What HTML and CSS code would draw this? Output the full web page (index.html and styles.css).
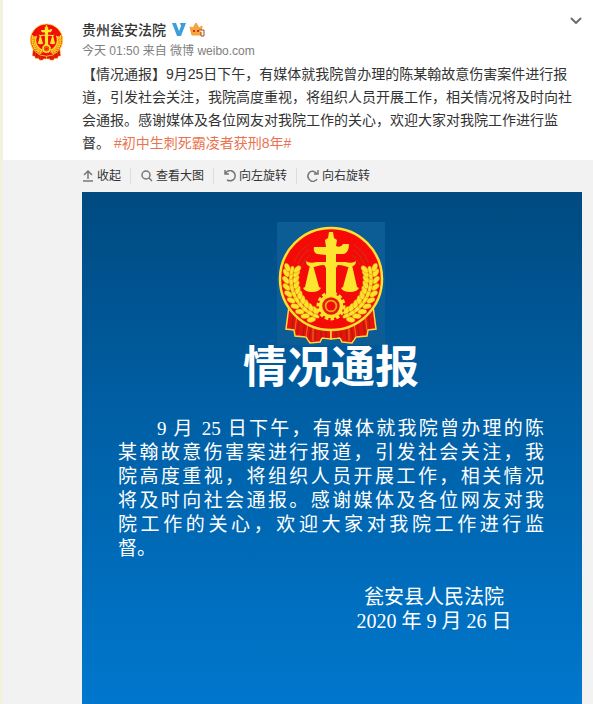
FILE: index.html
```
<!DOCTYPE html>
<html lang="zh-CN">

<head>
    <meta charset="UTF-8">
    <meta name="viewport" content="width=device-width, initial-scale=1.0">
    <title>贵州瓮安法院</title>
    <link rel="stylesheet" href="styles.css">
</head>

<body>

    <!-- shared shapes -->
    <svg class="defs" aria-hidden="true">
        <defs>
            <g id="grain">
                <ellipse cx="51" cy="92" rx="4.5" ry="2.6" transform="rotate(35 51 92)" />
                <ellipse cx="51" cy="102" rx="4.5" ry="2.6" transform="rotate(-35 51 102)" />
                <ellipse cx="53" cy="97" rx="4.5" ry="2" />
            </g>
            <g id="wheat">
                <use href="#grain" transform="rotate(22 54 57)" />
                <use href="#grain" transform="rotate(31 54 57)" />
                <use href="#grain" transform="rotate(40 54 57)" />
                <use href="#grain" transform="rotate(49 54 57)" />
                <use href="#grain" transform="rotate(58 54 57)" />
                <use href="#grain" transform="rotate(67 54 57)" />
                <use href="#grain" transform="rotate(76 54 57)" />
                <use href="#grain" transform="rotate(85 54 57)" />
                <use href="#grain" transform="rotate(94 54 57)" />
                <use href="#grain" transform="rotate(101 54 57)" />
            </g>
            <g id="ribbon">
                <path d="M12 84 L9 107 L17 108 L18 114 L29 115 L33 121 L43 120 L45 116 L54 117 L54 96 Z" fill="#e8140c" stroke="#ffd83a" stroke-width="1.5" />
                <path d="M17 88 L15 107 M23 94 L20 112 M28 98 L26 114 M34 102 L32 118 M39 105 L38 119 M44 107 L44 116 M49 108 L49 116" fill="none" stroke="#a8200c" stroke-width="1.2" />
                <path d="M20 92 L18 108 M31 101 L29 115 M36 104 L36 119" fill="none" stroke="#f0701c" stroke-width="1" />
            </g>
            <symbol id="emblem" viewBox="0 0 108 123">
                <use href="#ribbon" />
                <use href="#ribbon" transform="translate(108 0) scale(-1 1)" />
                <circle cx="54" cy="57" r="51" fill="#f60a08" stroke="#ffe02e" stroke-width="2.5" />
                <path d="M17 40 Q22 28 31 23 M21 42 Q25 32 32 28 M25 43 Q28 36 33 33 M91 40 Q86 28 77 23 M87 42 Q83 32 76 28 M83 43 Q80 36 75 33" fill="none" stroke="#c93616" stroke-width="1" />
                <g fill="#ffe32b" stroke="#d57a16" stroke-width="0.4">
                    <use href="#wheat" />
                    <use href="#wheat" transform="translate(108 0) scale(-1 1)" />
                </g>
                <g fill="#ffe62e">
                    <path d="M52 10 L56 10 L57 16 L60 18 L59 24 Q64 26 66 22 L72 22 Q72 30 67 32 L59 32 L59 73 L49 73 L49 33 L40 32 Q36 30 37 25 L49 25 L48 18 L51 16 Z" />
                    <path d="M29 39 Q32 42 40 40 L68 40 Q76 42 79 39 Q79 45 71 45 Q62 42 54 43 Q46 42 37 45 Q29 45 29 39 Z" />
                    <path d="M33 43 L36 43 L42 65 L44 66 Q42 70 35 70 Q28 70 26 66 L28 65 Z M72 43 L75 43 L80 65 L82 66 Q80 70 73 70 Q66 70 64 66 L66 65 Z" />
                    <path d="M46 41 L62 41 L59 46 L49 46 Z" />
                </g>
                <circle cx="54" cy="84" r="12" fill="#ffe32b" stroke="#ffe32b" stroke-width="5" stroke-dasharray="3.3 2" />
                <circle cx="54" cy="84" r="12" fill="#ffe32b" />
                <circle cx="54" cy="84" r="7.5" fill="#f9a51b" stroke="#e31b0c" stroke-width="2.5" />
                <circle cx="54" cy="84" r="4.5" fill="#f20d08" />
            </symbol>
        </defs>
    </svg>

    <article class="feed">
        <div class="feed-head">
            <a class="avatar" href="#" aria-label="贵州瓮安法院">
                <svg class="avatar-img"><use href="#emblem" /></svg>
            </a>
            <div class="detail">
                <div class="info">
                    <a class="name" href="#">贵州瓮安法院</a>
                    <svg class="icon-v" viewBox="0 0 14 13">
                        <path d="M0 0 H4 L7 8 L9 3 L8 0 H14 L9 13 H5 Z" fill="#3d9fd8" />
                    </svg>
                    <svg class="icon-vip" viewBox="0 0 17 15">
                        <path d="M1 5 L4 6 L7 1 L10 6 L13 4 L12 13 H3 Z" fill="#f9a43c" stroke="#f0a03c" stroke-width="1" />
                        <path d="M4 8 H6 V10 H4 Z M8 8 H10 V10 H8 Z" fill="#c8331c" />
                        <path d="M10 8 H15 V14 H12 V10" fill="#fff4df" stroke="#9a5232" stroke-width="1" />
                    </svg>
                </div>
                <div class="from">
                    <a href="#">今天 01:50</a> 来自 <a href="#">微博 weibo.com</a>
                </div>
                <p class="text">【情况通报】9月25日下午，有媒体就我院曾办理的陈某翰故意伤害案件进行报道，引发社会关注，我院高度重视，将组织人员开展工作，相关情况将及时向社会通报。感谢媒体及各位网友对我院工作的关心，欢迎大家对我院工作进行监督。 <a class="topic" href="#">#初中生刺死霸凌者获刑8年#</a></p>
            </div>
            <button class="more" type="button" aria-label="更多">
                <svg viewBox="0 0 12 7"><path d="M1 1 L6 6 L11 1" /></svg>
            </button>
        </div>

        <div class="expand">
            <div class="tools">
                <button type="button">
                    <svg viewBox="0 0 12 12"><path d="M1 11 H11 M6 9 V1 M2 5 L6 1 L10 5" /></svg>收起
                </button>
                <button type="button">
                    <svg viewBox="0 0 12 12"><circle cx="5" cy="5" r="4" /><path d="M8 8 L11 11" /></svg>查看大图
                </button>
                <button type="button">
                    <svg viewBox="0 0 12 12"><path d="M1 0 V4 H5 M1 4 C3 1 6 0 8 1 C12 3 12 8 9 10 C7 11 5 11 3 10" /></svg>向左旋转
                </button>
                <button type="button">
                    <svg viewBox="0 0 12 12"><path d="M11 0 V4 H7 M10 4 C8 1 4 0 2 3 C0 6 1 9 4 11 C6 12 9 11 10 9" /></svg>向右旋转
                </button>
            </div>

            <section class="notice">
                <div class="notice-emblem">
                    <svg><use href="#emblem" /></svg>
                </div>
                <h1>情况通报</h1>
                <p class="notice-text">
                    <span class="first">9 月 25 日下午，有媒体就我院曾办理的陈</span>
                    <span>某翰故意伤害案进行报道，引发社会关注，我</span>
                    <span>院高度重视，将组织人员开展工作，相关情况</span>
                    <span>将及时向社会通报。感谢媒体及各位网友对我</span>
                    <span>院工作的关心，欢迎大家对我院工作进行监</span>
                    <span class="last">督。</span>
                </p>
                <p class="sign">
                    <span>瓮安县人民法院</span>
                    <span>2020 年 9 月 26 日</span>
                </p>
            </section>
        </div>
    </article>

</body>

</html>
```
FILE: styles.css
```
* {
    box-sizing: border-box;
}

body {
    margin: 0;
    background: #fff;
    color: #333;
    font-family: "Liberation Sans", "Noto Sans CJK SC", sans-serif;
    font-size: 14px;
}

a {
    color: inherit;
    text-decoration: none;
}

button {
    padding: 0;
    border: 0;
    background: none;
    color: inherit;
    font: inherit;
}

p,
h1 {
    margin: 0;
}

svg {
    display: block;
}

.defs {
    position: absolute;
    width: 0;
    height: 0;
}

.feed {
    display: flex;
    flex-direction: column;
    min-height: 100vh;
    border-left: 3px solid #f2f2df;
}

.feed-head {
    display: flex;
    align-items: flex-start;
    padding: 18px 11px 5px 26px;
}

.avatar {
    flex: none;
    width: 53px;
    padding-top: 4px;
}

.avatar-img {
    width: 35px;
    height: 39px;
}

.detail {
    flex: 1;
    padding-right: 8px;
    margin-right: -20px;
}

.info {
    display: flex;
    align-items: center;
    height: 22px;
}

.name {
    font-weight: 500;
}

.icon-v {
    width: 14px;
    height: 13px;
    margin-left: 6px;
}

.icon-vip {
    width: 17px;
    height: 15px;
    margin-left: 3px;
}

.from {
    height: 23px;
    color: #808080;
    font-size: 12px;
    line-height: 23px;
}

.text {
    line-height: 23px;
}

.topic {
    color: #eb7350;
}

.more {
    flex: none;
    width: 12px;
    height: 7px;
    margin-top: -1px;
}

.more svg {
    width: 12px;
    height: 7px;
    fill: none;
    stroke: #696e78;
    stroke-width: 2;
}

.expand {
    display: flex;
    flex: 1;
    flex-direction: column;
    padding: 0 11px 0 79px;
    background: #f2f2f3;
}

.tools {
    display: flex;
    align-items: center;
    height: 32px;
    font-size: 12px;
}

.tools button {
    display: flex;
    align-items: center;
    gap: 3px;
    line-height: 16px;
}

.tools button + button {
    margin-left: 9px;
    padding-left: 10px;
    border-left: 1px solid #ddd;
}

.tools svg {
    width: 12px;
    height: 12px;
    fill: none;
    stroke: #777;
    stroke-width: 1.5;
}

.notice {
    flex: 1;
    padding: 30px 38px 70px 36px;
    background: linear-gradient(#004a80, #0060a6 45%, #0077cd);
    color: #fff;
    font-family: "Liberation Serif", "Noto Sans CJK SC", serif;
    font-size: 19px;
    line-height: 24px;
}

.notice-emblem {
    width: 108px;
    height: 123px;
    margin: 0 auto;
    background: #0c5c96;
}

.notice-emblem svg {
    width: 100%;
    height: 100%;
}

.notice h1 {
    font-size: 44px;
    font-weight: 700;
    line-height: 48px;
    text-align: center;
}

.notice-text {
    margin-top: 24px;
}

.notice-text span {
    display: block;
    text-align-last: justify;
}

.notice-text .first {
    padding-left: 39px;
}

.notice-text .last {
    text-align-last: left;
}

.sign {
    display: flex;
    flex-direction: column;
    align-items: center;
    width: 156px;
    margin: 24px 32px 0 auto;
    font-size: 20px;
}

.sign span {
    white-space: nowrap;
}
```
